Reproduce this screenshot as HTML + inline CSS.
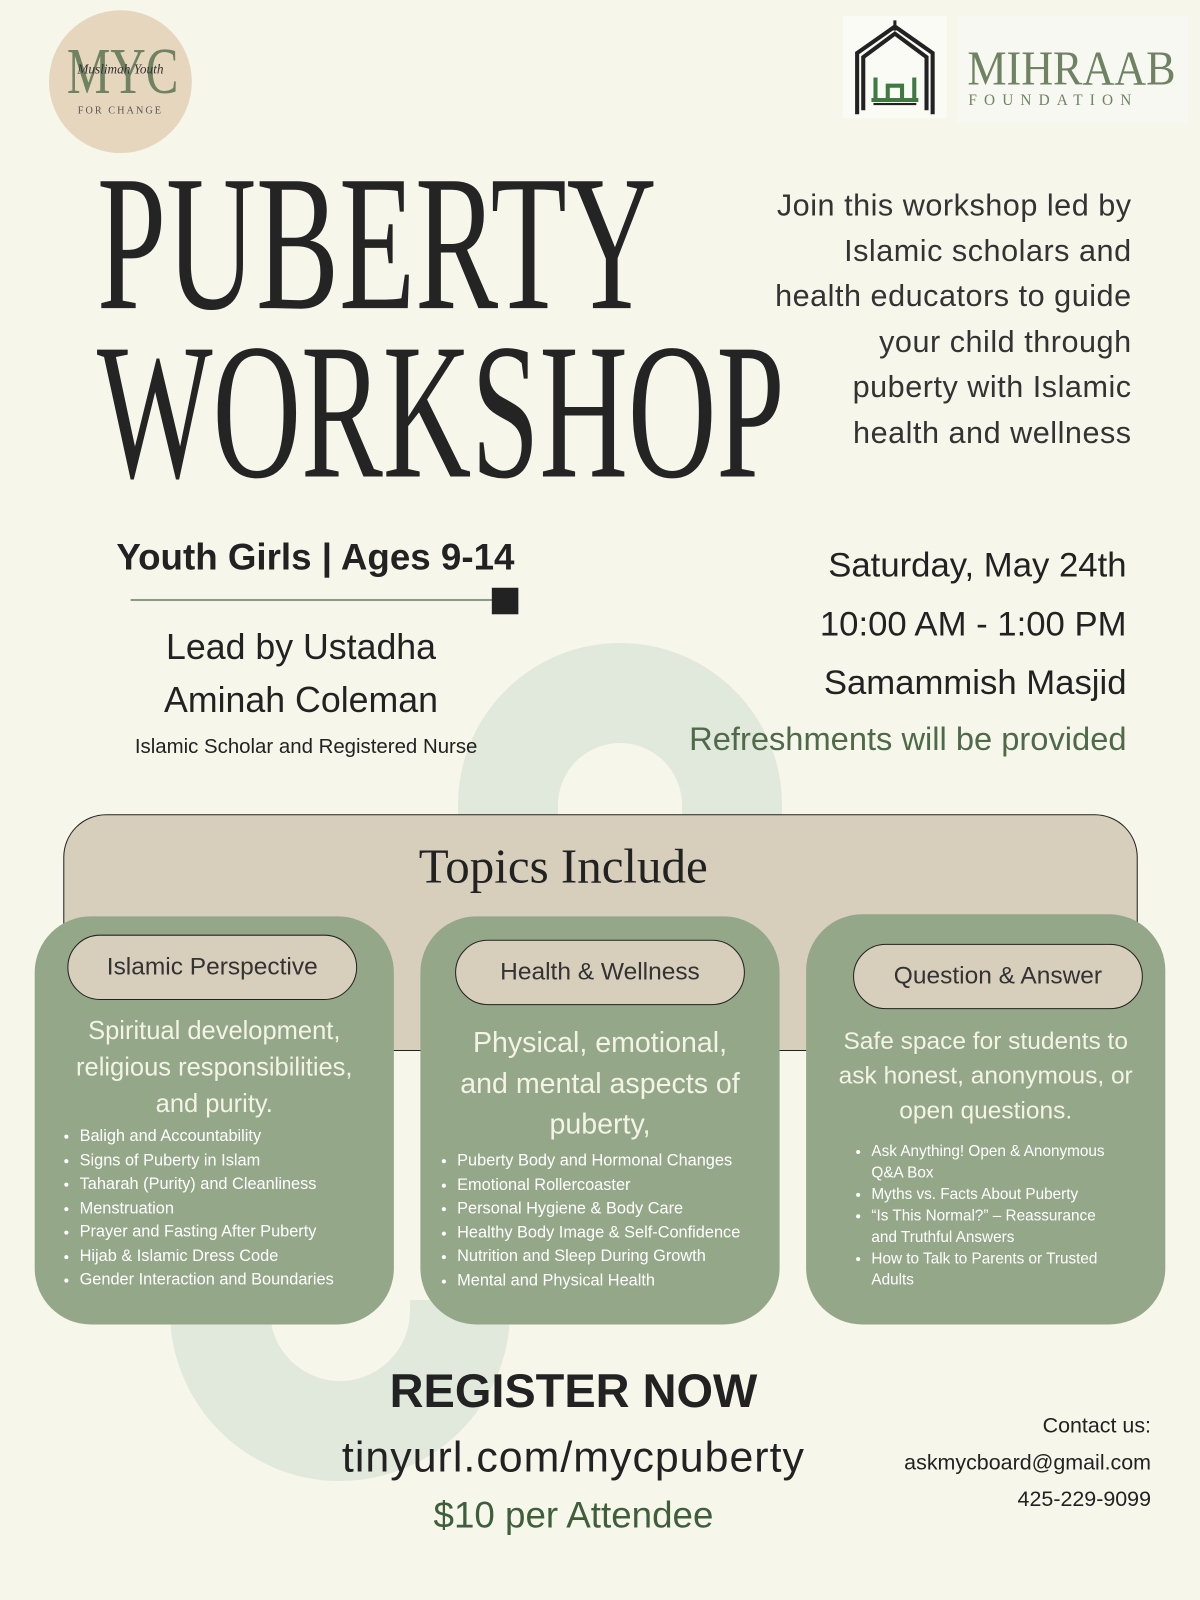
<!DOCTYPE html>
<html><head><meta charset="utf-8"><style>
*{margin:0;padding:0;box-sizing:border-box}
body{width:1200px;height:1600px;background:#f6f6ea;position:relative;overflow:hidden;font-family:"Liberation Sans",sans-serif;color:#222}
#w{position:absolute;left:0;top:0;width:1176px;height:1568px;transform:scale(1.0204);transform-origin:0 0}
.a{position:absolute}
.title{left:95px;font-family:"Liberation Serif",serif;font-size:190px;line-height:1;transform-origin:0 0;transform:scaleX(.642);color:#242424;white-space:nowrap}
.r{text-align:right;white-space:nowrap}
.c{text-align:center}
.card{background:#94a788;border-radius:55px}
.pill{background:#d7cebc;border:1.5px solid #222;border-radius:40px;text-align:center;font-size:24px;color:#333;position:absolute;height:64px;line-height:62px}
.card .d{position:absolute;left:0;right:0;text-align:center;color:#f3f3e6;font-size:25px;line-height:36px}
.card ul{position:absolute;color:#fff;font-size:16px;line-height:23.5px;padding-left:20px}
</style></head><body>
<svg class="a" style="left:0;top:0" width="1200" height="1600"><path d="M508 805 A112 112 0 0 1 732 805 L732 900 M508 805 L508 900 M220 1300 L220 1311 A120 120 0 0 0 460 1311 L460 1300" fill="none" stroke="#e1e8dc" stroke-width="100"/></svg>
<div id="w">
<!-- logos -->
<div class="a" style="left:48px;top:10px;width:140px;height:140px;border-radius:50%;background:#e6d6be"></div>
<div class="a c" style="left:48px;top:38px;width:140px;font-family:'Liberation Serif',serif;font-size:64px;color:#6f8262;transform:scaleX(.75);line-height:64px">MYC</div>
<div class="a c" style="left:48px;top:60px;width:140px;font-family:'Liberation Serif',serif;font-style:italic;font-size:13px;color:#333">Muslimah Youth</div>
<div class="a c" style="left:48px;top:103px;width:140px;font-family:'Liberation Serif',serif;font-size:10px;letter-spacing:2px;color:#555">FOR CHANGE</div>
<div class="a" style="left:826px;top:16px;width:102px;height:100px;background:#fbfbf6"></div>
<svg class="a" style="left:830px;top:18px" width="94" height="96" viewBox="0 0 94 96"><path d="M10 94V34L47 8L84 34V94M16 90V38L47 15L78 38V90" fill="none" stroke="#222" stroke-width="4"/><path d="M47 2v10" stroke="#222" stroke-width="3"/><path d="M24 80h46M28 80V58M66 80V58M40 80V66h14v14" stroke="#3e7a42" stroke-width="4" fill="none"/><path d="M26 84h42" stroke="#222" stroke-width="2"/></svg>
<div class="a" style="left:938px;top:16px;width:226px;height:104px;background:#f8f8f2"></div>
<div class="a" style="left:948px;top:44px;font-family:'Liberation Serif',serif;font-size:48px;color:#6f8262;transform:scaleX(.9);transform-origin:0 0;line-height:48px;white-space:nowrap">MIHRAAB</div>
<div class="a" style="left:949px;top:91px;font-family:'Liberation Serif',serif;font-size:15px;letter-spacing:7px;color:#6f8262">FOUNDATION</div>
<!-- title -->
<div class="a title" style="top:144px">PUBERTY</div>
<div class="a title" style="top:309px;transform:scaleX(.632)">WORKSHOP</div>
<div class="a r" style="right:67px;top:180px;font-size:30px;line-height:44.5px;color:#333;letter-spacing:.5px">Join this workshop led by<br>Islamic scholars and<br>health educators to guide<br>your child through<br>puberty with Islamic<br>health and wellness</div>
<div class="a" style="left:114px;top:525px;font-size:36px;font-weight:bold;color:#222">Youth Girls | Ages 9-14</div>
<div class="a" style="left:128px;top:587px;width:360px;height:2px;background:#8a9a84"></div>
<div class="a" style="left:482px;top:576px;width:26px;height:26px;background:#222"></div>
<div class="a c" style="left:95px;width:400px;top:609px;font-size:35px;line-height:52px;color:#222">Lead by Ustadha<br>Aminah Coleman</div>
<div class="a c" style="left:90px;width:420px;top:721px;font-size:20px;color:#222">Islamic Scholar and Registered Nurse</div>
<div class="a r" style="right:72px;top:526px;font-size:34px;line-height:57.5px;color:#222">Saturday, May 24th<br>10:00 AM - 1:00 PM<br>Samammish Masjid</div>
<div class="a r" style="right:72px;top:706px;font-size:32px;color:#4e6a48">Refreshments will be provided</div>
<!-- topics -->
<div class="a" style="left:62px;top:798px;width:1053px;height:232px;background:#d7cebc;border:1.5px solid #222;border-radius:42px"></div>
<div class="a c" style="left:62px;width:980px;top:822px;font-family:'Liberation Serif',serif;font-size:48px;color:#222">Topics Include</div>

<div class="a card" style="left:34px;top:898px;width:352px;height:400px">
<div class="pill" style="left:32px;top:18px;width:284px">Islamic Perspective</div>
<div class="d" style="top:94px">Spiritual development,<br>religious responsibilities,<br>and purity.</div>
<ul style="left:24px;top:204px"><li>Baligh and Accountability</li><li>Signs of Puberty in Islam</li><li>Taharah (Purity) and Cleanliness</li><li>Menstruation</li><li>Prayer and Fasting After Puberty</li><li>Hijab &amp; Islamic Dress Code</li><li>Gender Interaction and Boundaries</li></ul>
</div>
<div class="a card" style="left:412px;top:898px;width:352px;height:400px">
<div class="pill" style="left:34px;top:23px;width:284px">Health &amp; Wellness</div>
<div class="d" style="top:104px;font-size:28px;line-height:40px">Physical, emotional,<br>and mental aspects of<br>puberty,</div>
<ul style="left:16px;top:228px"><li>Puberty Body and Hormonal Changes</li><li>Emotional Rollercoaster</li><li>Personal Hygiene &amp; Body Care</li><li>Healthy Body Image &amp; Self-Confidence</li><li>Nutrition and Sleep During Growth</li><li>Mental and Physical Health</li></ul>
</div>
<div class="a card" style="left:790px;top:896px;width:352px;height:402px">
<div class="pill" style="left:46px;top:29px;width:284px">Question &amp; Answer</div>
<div class="d" style="top:108px;font-size:24px;line-height:34px">Safe space for students to<br>ask honest, anonymous, or<br>open questions.</div>
<ul style="left:44px;top:222px;font-size:15px;line-height:21px;width:250px"><li>Ask Anything! Open &amp; Anonymous Q&amp;A Box</li><li>Myths vs. Facts About Puberty</li><li>“Is This Normal?” – Reassurance and Truthful Answers</li><li>How to Talk to Parents or Trusted Adults</li></ul>
</div>
<!-- bottom -->
<div class="a c" style="left:262px;width:600px;top:1336px;font-size:46px;font-weight:bold;color:#222">REGISTER NOW</div>
<div class="a c" style="left:262px;width:600px;top:1404px;font-size:42px;color:#222;letter-spacing:1px">tinyurl.com/mycpuberty</div>
<div class="a c" style="left:262px;width:600px;top:1464px;font-size:36px;color:#3f5f3b">$10 per Attendee</div>
<div class="a r" style="right:48px;top:1380px;font-size:21px;line-height:36px;color:#222">Contact us:<br>askmycboard@gmail.com<br>425-229-9099</div>
</div>
</body></html>
